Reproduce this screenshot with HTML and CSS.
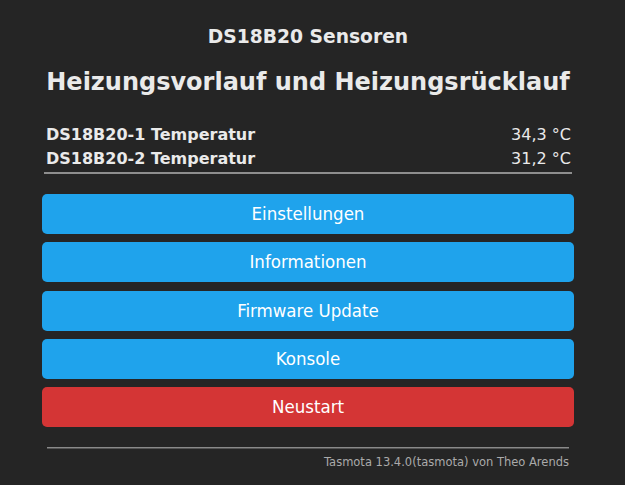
FILE: index.html
```html
<!DOCTYPE html>
<html lang="de">
<head>
<meta charset="utf-8">
<title>Tasmota</title>
<link rel="stylesheet" href="styles.css">
</head>
<body>
<div class="page">
  <h3 class="module">DS18B20 Sensoren</h3>
  <h2 class="device">Heizungsvorlauf und Heizungsrücklauf</h2>
  <div class="sensors">
    <div class="row"><span class="label">DS18B20-1 Temperatur</span><span class="value">34,3 °C</span></div>
    <div class="row"><span class="label">DS18B20-2 Temperatur</span><span class="value">31,2 °C</span></div>
  </div>
  <div class="rule"></div>
  <div class="buttons">
    <button class="btn">Einstellungen</button>
    <button class="btn">Informationen</button>
    <button class="btn">Firmware Update</button>
    <button class="btn">Konsole</button>
    <button class="btn btn-red">Neustart</button>
  </div>
  <div class="footer">
    <div class="footer-rule"></div>
    <a class="footer-link" href="#">Tasmota 13.4.0(tasmota) von Theo Arends</a>
  </div>
</div>
</body>
</html>
```

FILE: styles.css
```css
html, body {
  margin: 0;
  padding: 0;
  background: #252525;
}
body {
  font-family: "DejaVu Sans", Verdana, sans-serif;
  color: #eaeaea;
}
.page {
  width: 532px;
  margin-left: 42px;
  padding-top: 26px;
  display: flex;
  flex-direction: column;
}
.module {
  margin: 0;
  font-size: 18.7px;
  line-height: 22px;
  font-weight: bold;
  text-align: center;
  color: #eaeaea;
}
.device {
  margin: 19px 0 0 0;
  font-size: 24px;
  line-height: 30px;
  font-weight: bold;
  text-align: center;
  color: #eaeaea;
}
.sensors {
  margin-top: 26px;
  padding: 0 3px 0 4px;
  display: flex;
  flex-direction: column;
}
.row {
  display: flex;
  justify-content: space-between;
  font-size: 16px;
  line-height: 24px;
}
.label {
  font-weight: bold;
}
.rule {
  margin: 1px 2px 0 2px;
  height: 2px;
  background: #8e8e8e;
}
.buttons {
  margin-top: 20px;
  display: flex;
  flex-direction: column;
  gap: 8.3px;
}
.btn {
  display: block;
  width: 100%;
  height: 40px;
  border: 0;
  border-radius: 5px;
  background: #1fa3ec;
  color: #ffffff;
  font-family: "DejaVu Sans Condensed", "DejaVu Sans", sans-serif;
  font-size: 18.5px;
  line-height: 40px;
  padding: 0;
  text-align: center;
}
.btn-red {
  background: #d43535;
}
.footer {
  margin-top: 20px;
  display: flex;
  flex-direction: column;
  align-items: flex-end;
  padding: 0 5px;
}
.footer-rule {
  align-self: stretch;
  height: 1px;
  background: #8a8a8a;
  border-bottom: 1px solid #555;
}
.footer-link {
  margin-top: 6px;
  font-size: 11.5px;
  line-height: 14px;
  color: #aaaaaa;
  text-decoration: none;
}
```
